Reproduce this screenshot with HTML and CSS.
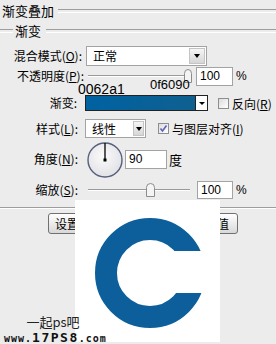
FILE: index.html
```html
<!DOCTYPE html>
<html>
<head>
<meta charset="utf-8">
<link rel="stylesheet" href="styles.css">
</head>
<body>
<div class="dlg">
  <div class="title"><span>渐变叠加</span></div>
  <div class="legend"><span>渐变</span></div>

  <div class="row r1">
    <div class="lbl p2">混合模式(<u>O</u>):</div>
    <div class="select wide"><span class="sel-text">正常</span><span class="sel-btn"><i class="tri"></i></span></div>
  </div>

  <div class="row r2">
    <div class="lbl p0">不透明度(<u>P</u>):</div>
    <div class="slider s-op"><svg class="thumb" style="margin-left:100px" width="8" height="14" viewBox="0 0 8 14"><path d="M0.5 13.5V4.5Q0.5 0.5 4 0.5Q7.5 0.5 7.5 4.5V13.5Z" fill="#f4f4f4" stroke="#8c8c8c"/></svg></div>
    <div class="num op">100</div>
    <span class="pct">%</span>
  </div>

  <div class="row r3">
    <div class="lbl p7">渐变:</div>
    <div class="grad"><span class="grad-fill"></span><span class="grad-btn"><i class="tri"></i></span></div>
    <span class="chk"></span>
    <span class="chk-lbl">反向(<u>R</u>)</span>
  </div>

  <div class="row r4">
    <div class="lbl p6">样式(<u>L</u>):</div>
    <div class="select narrow"><span class="sel-text">线性</span><span class="sel-btn"><i class="tri"></i></span></div>
    <span class="chk on"><svg width="11" height="11" viewBox="0 0 11 11"><path d="M2.5 5.5L4.5 8L8.5 2.5" fill="none" stroke="#5a62b8" stroke-width="1.6"/></svg></span>
    <span class="chk-lbl">与图层对齐(<u>I</u>)</span>
  </div>

  <div class="row r5">
    <div class="lbl p6">角度(<u>N</u>):</div>
    <svg class="dial" width="36" height="38" viewBox="0 0 36 38">
      <defs><radialGradient id="dg" cx="0.45" cy="0.4" r="0.6"><stop offset="0" stop-color="#fbfbfb"/><stop offset="1" stop-color="#e2e2e6"/></radialGradient></defs>
      <circle cx="18" cy="20" r="17" fill="url(#dg)" stroke="#56607e" stroke-width="1.4"/>
      <line x1="18" y1="20" x2="18" y2="3" stroke="#000" stroke-width="1.3"/>
      <rect x="16.5" y="18.5" width="3" height="3" fill="#000"/>
    </svg>
    <div class="num ang">90</div>
    <span class="deg">度</span>
  </div>

  <div class="row r6">
    <div class="lbl p6">缩放(<u>S</u>):</div>
    <div class="slider s-sc"><svg class="thumb" style="margin-left:62px" width="9" height="14" viewBox="0 0 9 14"><path d="M0.5 13.5V4.5Q0.5 0.5 4.5 0.5Q8.5 0.5 8.5 4.5V13.5Z" fill="#f4f4f4" stroke="#8c8c8c"/></svg></div>
    <div class="num sc">100</div>
    <span class="pct">%</span>
  </div>

  <div class="sep"></div>

  <div class="btns">
    <span class="btn b-left">设置为默认值</span>
    <span class="btn b-right">复位为默认值</span>
  </div>

  <span class="note n1">0062a1</span>
  <span class="note n2">0f6090</span>

  <div class="preview">
    <svg width="145" height="142" viewBox="0 0 145 142">
      <circle cx="75" cy="73" r="44" fill="none" stroke="#0c5f9a" stroke-width="22"/>
      <rect x="75" y="51" width="70" height="42" fill="#fff"/>
    </svg>
  </div>

  <div class="mark">
    <div class="mark-cn">一起ps吧</div>
    <div class="mark-url"><span class="sm">www.</span>17PS8<span class="sm">.com</span></div>
  </div>
</div>
</body>
</html>
```
FILE: styles.css
```css
* { box-sizing: border-box; }
html, body { margin: 0; padding: 0; }
body { background: #ececec; }

.dlg {
  position: relative;
  width: 276px;
  height: 344px;
  overflow: hidden;
  background: #ececec;
  font-family: "Noto Sans CJK SC", "Liberation Sans", sans-serif;
  font-size: 12px;
  color: #000;
}

u { text-decoration: underline; text-underline-offset: 1px; }

.title {
  display: flex;
  align-items: center;
  height: 16px;
  margin-top: 3px;
  padding-left: 2px;
  font-size: 13px;
  line-height: 16px;
}
.title span { padding-right: 4px; }
.title::after, .legend::after, .legend::before {
  content: "";
  flex: 1;
  height: 2px;
  border-top: 1px solid #9d9d9d;
  border-bottom: 1px solid #fff;
}
.legend {
  display: flex;
  align-items: center;
  height: 16px;
  margin-top: 4px;
  font-size: 13px;
  line-height: 16px;
}
.legend::before { flex: none; width: 13px; }
.legend span { padding: 0 5px 0 2px; }

.row { display: flex; align-items: center; }
.r1 { margin-top: 7px; height: 20px; }
.r2 { height: 20px; }
.r3 { margin-top: 9px; height: 16px; }
.r4 { margin-top: 8px; height: 19px; }
.r5 { margin-top: 1px; height: 40px; }
.r6 { margin-top: 2px; height: 18px; }

.lbl { width: 84px; flex: none; text-align: right; line-height: 16px; white-space: nowrap; }
.p0 { padding-right: 0; }
.p2 { padding-right: 2px; }
.p6 { padding-right: 6px; }
.p7 { padding-right: 7px; }

.select {
  display: flex;
  height: 100%;
  background: #fff;
  border: 1px solid #a3a3a3;
}
.select.wide { width: 121px; margin-left: 2px; }
.select.narrow { width: 61px; margin-left: 1px; }
.sel-text { flex: 1; padding-left: 6px; line-height: 17px; }
.sel-btn {
  width: 16px;
  display: flex;
  align-items: center;
  justify-content: center;
  margin: 1px;
  background: linear-gradient(#f6f6f6, #d6d6d6);
  border: 1px solid #c4c4c4;
}
.narrow .sel-btn { width: 11px; }
.tri {
  width: 0; height: 0;
  border-left: 3.5px solid transparent;
  border-right: 3.5px solid transparent;
  border-top: 4px solid #000;
}

.slider {
  width: 112px;
  height: 14px;
  display: flex;
  align-items: flex-start;
  background:
    linear-gradient(#9a9a9a, #9a9a9a) no-repeat 4px 6px / 102px 1px,
    linear-gradient(#fff, #fff) no-repeat 4px 7px / 102px 1px;
}
.thumb { display: block; flex: none; }

.num {
  height: 19px;
  background: #fff;
  border: 1px solid #a3a3a3;
  font-family: "Liberation Sans", sans-serif;
  font-size: 12px;
  line-height: 17px;
  padding-left: 3px;
}
.num.op { width: 37px; }
.num.sc { width: 36px; height: 18px; line-height: 16px; margin-left: 1px; }
.num.ang { width: 42px; margin-left: 2px; }
.pct { margin-left: 3px; font-family: "Liberation Sans", sans-serif; font-size: 12px; }
.deg { margin-left: 2px; font-size: 13px; }

.grad {
  display: flex;
  width: 123px;
  height: 16px;
  margin-left: 1px;
  border: 1px solid #222;
  background: #fff;
}
.grad-fill {
  flex: 1;
  background: linear-gradient(to right, #0062a1, #0f6090);
  border-right: 1px solid #222;
}
.grad-btn {
  width: 11px;
  display: flex;
  align-items: center;
  justify-content: center;
}
.grad-btn .tri { border-left-width: 3px; border-right-width: 3px; border-top-width: 3px; }

.chk {
  width: 11px;
  height: 11px;
  flex: none;
  margin-left: 10px;
  border: 1px solid #8e8e8e;
  background: linear-gradient(135deg, #dcdcdc, #fff);
  display: flex;
}
.chk svg { display: block; margin: -1px; }
.r4 .chk { margin-left: 12px; }
.chk-lbl { margin-left: 3px; white-space: nowrap; }

.dial { display: block; margin-left: 3px; flex: none; }

.sep {
  margin-top: 8px;
  height: 2px;
  border-top: 1px solid #9d9d9d;
  border-bottom: 1px solid #fff;
}

.btns {
  display: flex;
  justify-content: space-between;
  margin-top: 4px;
  padding: 0 38px 0 48px;
}
.btn {
  height: 21px;
  padding: 0 6px;
  border: 1px solid #707070;
  border-radius: 3px;
  background: linear-gradient(#ffffff, #d8d8d8);
  line-height: 19px;
  font-size: 12px;
}
.b-right { padding-right: 8px; }

.note {
  position: absolute;
  font-family: "Liberation Sans", sans-serif;
  color: #000;
  line-height: 14px;
}
.n1 { left: 78px; top: 82px; font-size: 14px; }
.n2 { left: 150px; top: 78px; font-size: 13px; }

.preview {
  position: absolute;
  left: 75px;
  top: 200px;
  width: 145px;
  height: 142px;
  background: #fff;
}
.preview svg { display: block; }

.mark {
  position: absolute;
  left: 4px;
  top: 314px;
  width: 104px;
  color: #222;
}
.mark-cn { font-size: 13px; line-height: 15px; text-align: center; padding-right: 6px; }
.mark-url {
  margin-top: 3px;
  font-family: "DejaVu Sans Mono", monospace;
  font-weight: bold;
  font-size: 13px;
  line-height: 12px;
  letter-spacing: 1.5px;
  color: #111;
  white-space: nowrap;
}
.mark-url .sm { font-size: 10px; letter-spacing: 1px; }
```
